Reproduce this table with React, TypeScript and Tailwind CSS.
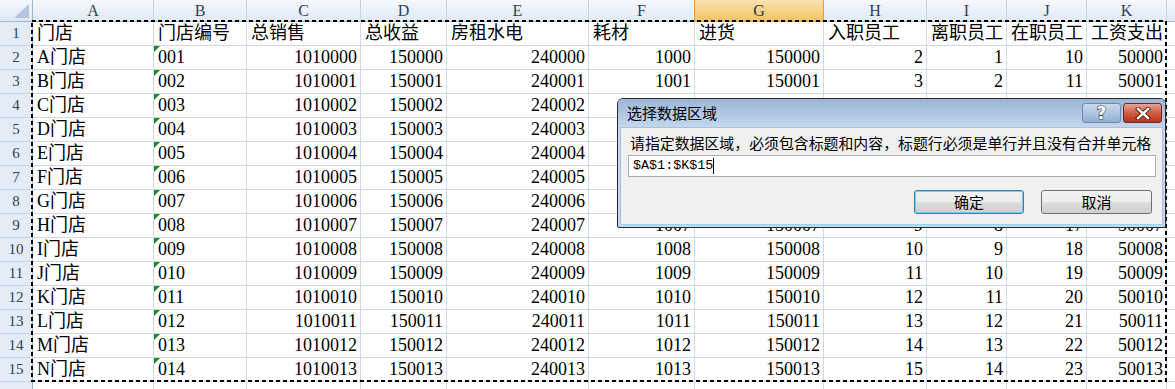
import React from 'react';

const colW = [
  'w-[33px]',
  'w-[121px]',
  'w-[93px]',
  'w-[114px]',
  'w-[86px]',
  'w-[142px]',
  'w-[106px]',
  'w-[129px]',
  'w-[103px]',
  'w-[80px]',
  'w-[80px]',
  'w-[80px]',
];

const letters = ['A', 'B', 'C', 'D', 'E', 'F', 'G', 'H', 'I', 'J', 'K'];
const titles = ['门店', '门店编号', '总销售', '总收益', '房租水电', '耗材', '进货', '入职员工', '离职员工', '在职员工', '工资支出'];

const cellFont = "font-['Liberation_Serif','Noto_Sans_CJK_SC',serif]";

function rowValues(i: number): string[] {
  return [
    String.fromCharCode(65 + i) + '门店',
    String(i + 1).padStart(3, '0'),
    String(1010000 + i),
    String(150000 + i),
    String(240000 + i),
    String(1000 + i),
    String(150000 + i),
    String(2 + i),
    String(1 + i),
    String(10 + i),
    String(50000 + i),
  ];
}

function HeaderRow() {
  return (
    <div className="flex h-[22px] shrink-0">
      <div className="relative w-[33px] shrink-0 border-r border-b border-[#9eb6ce] bg-linear-to-b from-[#f3f7fc] to-[#dfe8f5]">
        <svg className="absolute left-0 top-0" width="32" height="21">
          <polygon points="14,18 29,18 29,4" fill="#b4c6dc" />
        </svg>
      </div>
      {letters.map((l, i) => (
        <div
          key={l}
          className={`${colW[i + 1]} shrink-0 flex items-center justify-center border-b text-[16px] ${
            i === 6
              ? 'bg-linear-to-b from-[#fbe2b0] to-[#f2c462] border-r border-[#f29536] text-[#20364a]'
              : i === 5
              ? 'bg-linear-to-b from-[#f6f9fd] to-[#e1e9f5] border-r border-r-[#f29536] border-b-[#9eb6ce] text-[#2c4257]'
              : 'bg-linear-to-b from-[#f6f9fd] to-[#e1e9f5] border-r border-r-[#c5d3e4] border-b-[#9eb6ce] text-[#2c4257]'
          }`}
        >
          {l}
        </div>
      ))}
      <div className="flex-1 border-b border-[#9eb6ce] bg-linear-to-b from-[#f6f9fd] to-[#e1e9f5]" />
    </div>
  );
}

function DataRow({ num, values }: { num: number | null; values: string[] | null }) {
  return (
    <div className="flex h-[24px] shrink-0">
      <div className="w-[33px] shrink-0 flex items-center justify-center border-r border-r-[#9eb6ce] border-b border-b-[#c5d3e4] bg-[#e4ecf7] text-[15px] text-[#2c4257]">
        {num}
      </div>
      {letters.map((l, i) => {
        const v = values ? values[i] : '';
        const left = num === 1 || i <= 1;
        return (
          <div
            key={l}
            className={`${colW[i + 1]} relative shrink-0 flex items-center overflow-hidden whitespace-nowrap border-r border-b border-[#d0d7e5] pl-[4px] pr-[3px] text-[18px] text-black ${
              left ? 'justify-start' : 'justify-end'
            }`}
          >
            {i === 1 && num !== 1 && values && (
              <span className="absolute left-0 top-0 w-0 h-0 border-t-[6px] border-t-[#138a1f] border-r-[6px] border-r-transparent" />
            )}
            {v}
          </div>
        );
      })}
      <div className="flex-1 border-b border-[#d0d7e5]" />
    </div>
  );
}

function Dialog() {
  return (
    <div className="absolute left-[617px] top-[98px] w-[549px] h-[130px] flex flex-col rounded-t-[6px] rounded-b-[2px] border border-[#2b2b2b] bg-[#c4d7ed] overflow-hidden font-['Noto_Sans_CJK_SC',sans-serif]">
      <div className="h-[28px] shrink-0 flex justify-between bg-linear-to-b from-[#9cb6d7] to-[#c4d7ed] pl-[9px] pr-[3px]">
        <span className="mt-[4px] text-[15px] leading-[20px] text-black">选择数据区域</span>
        <div className="flex gap-[2px] mt-[4px]">
          <div className="w-[39px] h-[20px] rounded-[3px] border border-[#6f88ab] bg-linear-to-b from-[#cad9ed] via-[#b1c6e2] to-[#94aed2] flex items-center justify-center">
            <span className="text-[17px] leading-none font-bold text-white [-webkit-text-stroke:1.2px_#3a4b60] [paint-order:stroke_fill] font-['DejaVu_Sans',sans-serif]">?</span>
          </div>
          <div className="w-[39px] h-[20px] rounded-[3px] border border-[#6b2a1e] bg-linear-to-b from-[#e6a596] via-[#cf5c45] to-[#b4361d] flex items-center justify-center">
            <svg width="16" height="13" viewBox="0 0 16 13">
              <path d="M3 2 L13 11 M13 2 L3 11" stroke="#4a1a12" strokeWidth="4.2" strokeLinecap="square" />
              <path d="M3 2 L13 11 M13 2 L3 11" stroke="#ffffff" strokeWidth="2.4" strokeLinecap="square" />
            </svg>
          </div>
        </div>
      </div>
      <div className="flex-1 mx-[2px] mb-[2px] border border-[#a9c0dc] border-b-[#8fd8ef] bg-[#f0f0f0] flex flex-col">
        <div className="mt-[5px] pl-[9px] text-[14.9px] leading-[20px] text-black whitespace-nowrap">
          请指定数据区域，必须包含标题和内容，标题行必须是单行并且没有合并单元格
        </div>
        <div className="mt-[2px] ml-[7px] mr-[6px] h-[22px] border border-[#abadb3] bg-white flex items-center pl-[4px]">
          <span className="font-['Liberation_Mono',monospace] text-[13.4px] text-black">$A$1:$K$15</span>
          <span className="w-px h-[16px] bg-black" />
        </div>
        <div className="mt-[13px] mr-[10px] flex justify-end gap-[17px]">
          <div className="w-[110px] h-[24px] rounded-[3px] border border-[#3c7fb1] shadow-[inset_0_0_0_1px_#6fd0f3] bg-[linear-gradient(#f3f3f3,#ececec_50%,#dedede_50%,#d0d0d0)] flex items-center justify-center text-[15px] text-black">
            确定
          </div>
          <div className="w-[111px] h-[24px] rounded-[3px] border border-[#707070] bg-[linear-gradient(#f3f3f3,#ececec_50%,#dedede_50%,#d0d0d0)] flex items-center justify-center text-[15px] text-black">
            取消
          </div>
        </div>
      </div>
    </div>
  );
}

export default function App() {
  const rows = Array.from({ length: 14 }, (_, i) => rowValues(i));
  return (
    <div className={`relative w-[1175px] h-[389px] overflow-hidden bg-white ${cellFont}`}>
      <div className="flex flex-col">
        <HeaderRow />
        <DataRow num={1} values={titles} />
        {rows.map((r, i) => (
          <DataRow key={i} num={i + 2} values={r} />
        ))}
        <DataRow num={null} values={null} />
      </div>
      <svg className="absolute left-0 top-0 pointer-events-none" width="1175" height="389">
        <rect x="32" y="21" width="1134" height="360" fill="none" stroke="#000" strokeWidth="2" strokeDasharray="4 3" />
      </svg>
      <Dialog />
    </div>
  );
}
